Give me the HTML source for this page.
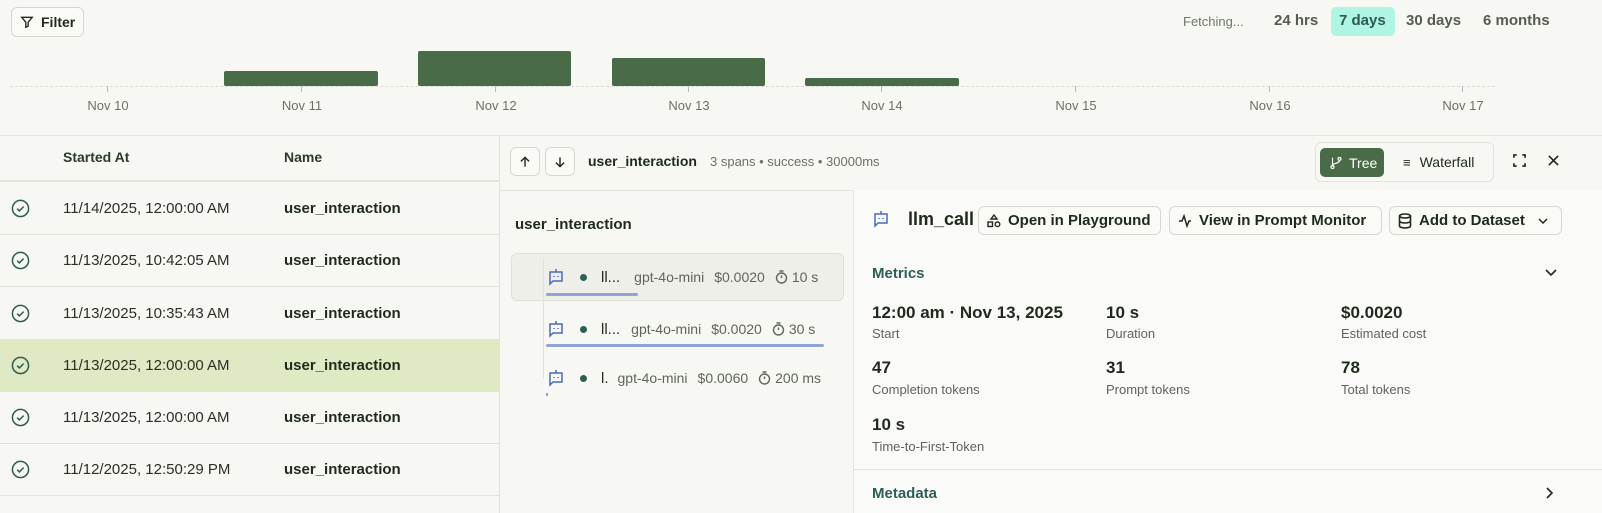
<!DOCTYPE html><html><head><style>
*{margin:0;padding:0;box-sizing:border-box}
body{width:1602px;height:513px;overflow:hidden;background:#f7f7f3;font-family:"Liberation Sans",sans-serif;color:#1f2a1c;position:relative}
.a{position:absolute}
.btn{position:absolute;border:1px solid #d6d8d0;border-radius:6px;background:#fafaf7;font-weight:bold;font-size:15px;display:flex;align-items:center;gap:7px;padding:0 8px;color:#1f2a1c}
.lbl{position:absolute;top:98px;font-size:13px;color:#6b7266;transform:translateX(-50%)}
.tick{position:absolute;top:86px;width:1px;height:6px;background:#bbb}
.bar{position:absolute;background:#4a6b47;border-radius:2px}
.row{position:absolute;left:0;width:499px;height:52px;border-bottom:1px solid #e2e3dd;font-size:15px}
.row .d{position:absolute;left:63px;top:17px;color:#2a2f28}
.row .n{position:absolute;left:284px;top:17px;font-weight:bold}
.row svg{position:absolute;left:11px;top:16px}
.m{position:absolute;font-size:17px;font-weight:bold}
.ml{position:absolute;font-size:13px;color:#5d665a}
.span{position:absolute;font-size:14px;color:#5d665a;display:flex;align-items:center}
.tm{display:inline-flex;align-items:center;gap:4px}
</style></head><body>
<div class="btn" style="left:11px;top:7px;height:30px;font-size:14px"><svg width="14" height="14" viewBox="0 0 24 24" fill="none" stroke="#1f2a1c" stroke-width="2.3"><path d="M3 4h18l-7 8.5V19l-4 2v-8.5z"/></svg>Filter</div>
<div class="a" style="left:1183px;top:14px;font-size:13px;color:#6b7a66">Fetching...</div>
<div class="a" style="left:1274px;top:12px;font-size:15px;font-weight:bold;color:#555c52">24 hrs</div>
<div class="a" style="left:1331px;top:7px;width:64px;height:29px;background:#aef5e4;border-radius:5px"></div>
<div class="a" style="left:1339px;top:12px;font-size:15px;font-weight:bold;color:#2e5a50">7 days</div>
<div class="a" style="left:1406px;top:12px;font-size:15px;font-weight:bold;color:#555c52">30 days</div>
<div class="a" style="left:1483px;top:12px;font-size:15px;font-weight:bold;color:#555c52">6 months</div>
<div class="a" style="left:10px;top:86px;width:1485px;border-top:1px dashed #dcdcd6"></div>
<div class="bar" style="left:224px;top:71px;width:154px;height:15px"></div>
<div class="bar" style="left:418px;top:51px;width:153px;height:35px"></div>
<div class="bar" style="left:612px;top:58px;width:153px;height:28px"></div>
<div class="bar" style="left:805px;top:78px;width:154px;height:8px"></div>
<div class="tick" style="left:107px"></div><div class="tick" style="left:301px"></div><div class="tick" style="left:495px"></div><div class="tick" style="left:688px"></div><div class="tick" style="left:881px"></div><div class="tick" style="left:1075px"></div><div class="tick" style="left:1269px"></div><div class="tick" style="left:1462px"></div>
<div class="lbl" style="left:108px">Nov 10</div><div class="lbl" style="left:302px">Nov 11</div><div class="lbl" style="left:496px">Nov 12</div><div class="lbl" style="left:689px">Nov 13</div><div class="lbl" style="left:882px">Nov 14</div><div class="lbl" style="left:1076px">Nov 15</div><div class="lbl" style="left:1270px">Nov 16</div><div class="lbl" style="left:1463px">Nov 17</div>
<div class="a" style="left:0;top:135px;width:1602px;border-top:1px solid #e2e3dd"></div>
<div class="a" style="left:0;top:135px;width:499px;height:47px;border-bottom:2px solid #e2e3dd"></div>
<div class="a" style="left:63px;top:149px;font-size:14px;font-weight:bold;color:#2d3a2a">Started At</div>
<div class="a" style="left:284px;top:149px;font-size:14px;font-weight:bold;color:#2d3a2a">Name</div>
<div class="a" style="left:499px;top:135px;width:1px;height:378px;background:#e2e3dd"></div>
<div class="row" style="top:183px"><svg width="19" height="19" viewBox="0 0 20 20" fill="none" stroke="#2e5e55" stroke-width="1.6"><circle cx="10" cy="10" r="8.5"/><path d="M6.5 10.2l2.3 2.3 4.5-4.5"/></svg><span class="d">11/14/2025, 12:00:00 AM</span><span class="n">user_interaction</span></div>
<div class="row" style="top:235px"><svg width="19" height="19" viewBox="0 0 20 20" fill="none" stroke="#2e5e55" stroke-width="1.6"><circle cx="10" cy="10" r="8.5"/><path d="M6.5 10.2l2.3 2.3 4.5-4.5"/></svg><span class="d">11/13/2025, 10:42:05 AM</span><span class="n">user_interaction</span></div>
<div class="row" style="top:288px"><svg width="19" height="19" viewBox="0 0 20 20" fill="none" stroke="#2e5e55" stroke-width="1.6"><circle cx="10" cy="10" r="8.5"/><path d="M6.5 10.2l2.3 2.3 4.5-4.5"/></svg><span class="d">11/13/2025, 10:35:43 AM</span><span class="n">user_interaction</span></div>
<div class="row" style="top:340px;background:#dfe9c4"><svg width="19" height="19" viewBox="0 0 20 20" fill="none" stroke="#2e5e55" stroke-width="1.6"><circle cx="10" cy="10" r="8.5"/><path d="M6.5 10.2l2.3 2.3 4.5-4.5"/></svg><span class="d">11/13/2025, 12:00:00 AM</span><span class="n">user_interaction</span></div>
<div class="row" style="top:392px"><svg width="19" height="19" viewBox="0 0 20 20" fill="none" stroke="#2e5e55" stroke-width="1.6"><circle cx="10" cy="10" r="8.5"/><path d="M6.5 10.2l2.3 2.3 4.5-4.5"/></svg><span class="d">11/13/2025, 12:00:00 AM</span><span class="n">user_interaction</span></div>
<div class="row" style="top:444px"><svg width="19" height="19" viewBox="0 0 20 20" fill="none" stroke="#2e5e55" stroke-width="1.6"><circle cx="10" cy="10" r="8.5"/><path d="M6.5 10.2l2.3 2.3 4.5-4.5"/></svg><span class="d">11/12/2025, 12:50:29 PM</span><span class="n">user_interaction</span></div>
<div class="btn" style="left:510px;top:147px;width:30px;height:29px;justify-content:center;padding:0"><svg width="14" height="14" viewBox="0 0 24 24" fill="none" stroke="#1f2a1c" stroke-width="2.4"><path d="M12 20V4M5 11l7-7 7 7"/></svg></div>
<div class="btn" style="left:545px;top:147px;width:30px;height:29px;justify-content:center;padding:0"><svg width="14" height="14" viewBox="0 0 24 24" fill="none" stroke="#1f2a1c" stroke-width="2.4"><path d="M12 4v16M5 13l7 7 7-7"/></svg></div>
<div class="a" style="left:588px;top:153px;font-size:14px;font-weight:bold">user_interaction</div>
<div class="a" style="left:710px;top:154px;font-size:13px;color:#6b7266">3 spans • success • 30000ms</div>
<div class="a" style="left:1315px;top:142px;width:179px;height:40px;border:1px solid #e2e3dd;border-radius:6px"></div>
<div class="a" style="left:1320px;top:148px;width:64px;height:29px;background:#4a6b47;border-radius:5px;color:#fff;font-size:14px;display:flex;align-items:center;gap:6px;padding-left:9px"><svg width="14" height="14" viewBox="0 0 24 24" fill="none" stroke="#fff" stroke-width="2"><circle cx="6" cy="19" r="2.5"/><circle cx="18" cy="5" r="2.5"/><path d="M6 3v13.5M18 7.5c0 6-12 4-12 9"/></svg>Tree</div>
<div class="a" style="left:1403px;top:154px;font-size:14px;display:flex;align-items:center;gap:9px"><span style="font-size:13px">≡</span>Waterfall</div>
<svg class="a" style="left:1513px;top:154px" width="13" height="13" viewBox="0 0 14 14" fill="none" stroke="#1f2a1c" stroke-width="1.8"><path d="M1 4V1h3M10 1h3v3M13 10v3h-3M4 13H1v-3"/></svg>
<svg class="a" style="left:1548px;top:155px" width="11" height="11" viewBox="0 0 12 12" stroke="#1f2a1c" stroke-width="1.8"><path d="M1 1l10 10M11 1L1 11"/></svg>
<div class="a" style="left:500px;top:190px;width:1102px;border-top:1px solid #e2e3dd"></div>
<div class="a" style="left:853px;top:190px;width:749px;height:323px;background:#fafaf8;border-left:1px solid #e2e3dd"></div>
<div class="a" style="left:515px;top:216px;font-size:15px;font-weight:bold">user_interaction</div>
<div class="a" style="left:511px;top:253px;width:333px;height:48px;background:#efefea;border:1px solid #e0e1db;border-radius:6px"></div>
<div class="a" style="left:543px;top:259px;width:1px;height:120px;background:#e0e1db"></div>
<div class="a" style="left:546px;top:293px;width:92px;height:3px;background:#8fa5d6;border-radius:2px"></div>
<div class="a" style="left:546px;top:344px;width:278px;height:3px;background:#8fa5d6;border-radius:2px"></div>
<div class="a" style="left:546px;top:393px;width:2px;height:3px;background:#8fa5d6"></div>
<div class="span" style="left:547px;top:268px"><svg width="18" height="18" viewBox="0 0 18 18" fill="none" stroke="#4a6ac0" stroke-width="1.5"><path d="M9 1v3M3 4h12v9H6l-3 3z"/><path d="M7 8v1M11 8v1"/></svg><span style="margin-left:15px;width:7px;height:7px;border-radius:50%;background:#2e5e55;display:inline-block"></span><span style="margin-left:14px;font-size:15px;color:#1f2a1c">ll...</span><span style="margin-left:14px">gpt-4o-mini</span><span style="margin-left:10px">$0.0020</span><span class="tm" style="margin-left:10px"><svg width="13" height="14" viewBox="0 0 13 14" fill="none" stroke="#5d665a" stroke-width="1.4"><circle cx="6.5" cy="8" r="5"/><path d="M4.5 1h4M6.5 8V5.5"/></svg>10 s</span></div>
<div class="span" style="left:547px;top:320px"><svg width="18" height="18" viewBox="0 0 18 18" fill="none" stroke="#4a6ac0" stroke-width="1.5"><path d="M9 1v3M3 4h12v9H6l-3 3z"/><path d="M7 8v1M11 8v1"/></svg><span style="margin-left:15px;width:7px;height:7px;border-radius:50%;background:#2e5e55;display:inline-block"></span><span style="margin-left:14px;font-size:15px;color:#1f2a1c">ll...</span><span style="margin-left:11px">gpt-4o-mini</span><span style="margin-left:10px">$0.0020</span><span class="tm" style="margin-left:10px"><svg width="13" height="14" viewBox="0 0 13 14" fill="none" stroke="#5d665a" stroke-width="1.4"><circle cx="6.5" cy="8" r="5"/><path d="M4.5 1h4M6.5 8V5.5"/></svg>30 s</span></div>
<div class="span" style="left:547px;top:369px"><svg width="18" height="18" viewBox="0 0 18 18" fill="none" stroke="#4a6ac0" stroke-width="1.5"><path d="M9 1v3M3 4h12v9H6l-3 3z"/><path d="M7 8v1M11 8v1"/></svg><span style="margin-left:15px;width:7px;height:7px;border-radius:50%;background:#2e5e55;display:inline-block"></span><span style="margin-left:14px;font-size:15px;color:#1f2a1c">l.</span><span style="margin-left:9px">gpt-4o-mini</span><span style="margin-left:10px">$0.0060</span><span class="tm" style="margin-left:10px"><svg width="13" height="14" viewBox="0 0 13 14" fill="none" stroke="#5d665a" stroke-width="1.4"><circle cx="6.5" cy="8" r="5"/><path d="M4.5 1h4M6.5 8V5.5"/></svg>200 ms</span></div>
<svg class="a" style="left:872px;top:210px" width="18" height="18" viewBox="0 0 18 18" fill="none" stroke="#4a6ac0" stroke-width="1.5"><path d="M9 1v3M3 4h12v9H6l-3 3z"/><path d="M7 8v1M11 8v1"/></svg>
<div class="a" style="left:908px;top:209px;font-size:18px;font-weight:bold">llm_call</div>
<div class="btn" style="left:978px;top:206px;height:29px;width:183px"><svg width="14" height="14" viewBox="0 0 14 14" fill="none" stroke="#1f2a1c" stroke-width="1.4"><path d="M7 1l3 4H4z"/><rect x="1" y="8" width="4.5" height="4.5"/><circle cx="10.5" cy="10.3" r="2.3"/></svg>Open in Playground</div>
<div class="btn" style="left:1169px;top:206px;height:29px;width:213px"><svg width="14" height="14" viewBox="0 0 14 14" fill="none" stroke="#1f2a1c" stroke-width="1.5"><path d="M1 7h3l2-5 3 10 2-5h2"/></svg>View in Prompt Monitor</div>
<div class="btn" style="left:1389px;top:206px;height:29px;width:173px"><svg width="14" height="16" viewBox="0 0 14 16" fill="none" stroke="#1f2a1c" stroke-width="1.6"><ellipse cx="7" cy="3" rx="5.5" ry="2"/><path d="M1.5 3v10c0 1.1 2.5 2 5.5 2s5.5-.9 5.5-2V3M1.5 8c0 1.1 2.5 2 5.5 2s5.5-.9 5.5-2"/></svg>Add to Dataset <svg style="margin-left:6px" width="10" height="6" viewBox="0 0 10 6" fill="none" stroke="#1f2a1c" stroke-width="1.5"><path d="M1 1l4 4 4-4"/></svg></div>
<div class="a" style="left:872px;top:265px;font-size:15px;font-weight:bold;color:#2e5e55">Metrics</div>
<svg class="a" style="left:1545px;top:269px" width="12" height="8" viewBox="0 0 12 8" fill="none" stroke="#1f2a1c" stroke-width="1.6"><path d="M1 1l5 5 5-5"/></svg>
<div class="m" style="left:872px;top:303px">12:00 am · Nov 13, 2025</div><div class="ml" style="left:872px;top:326px">Start</div>
<div class="m" style="left:1106px;top:303px">10 s</div><div class="ml" style="left:1106px;top:326px">Duration</div>
<div class="m" style="left:1341px;top:303px">$0.0020</div><div class="ml" style="left:1341px;top:326px">Estimated cost</div>
<div class="m" style="left:872px;top:358px">47</div><div class="ml" style="left:872px;top:382px">Completion tokens</div>
<div class="m" style="left:1106px;top:358px">31</div><div class="ml" style="left:1106px;top:382px">Prompt tokens</div>
<div class="m" style="left:1341px;top:358px">78</div><div class="ml" style="left:1341px;top:382px">Total tokens</div>
<div class="m" style="left:872px;top:415px">10 s</div><div class="ml" style="left:872px;top:439px">Time-to-First-Token</div>
<div class="a" style="left:854px;top:469px;width:748px;border-top:1px solid #e2e3dd"></div>
<div class="a" style="left:872px;top:485px;font-size:15px;font-weight:bold;color:#2e5e55">Metadata</div>
<svg class="a" style="left:1546px;top:487px" width="8" height="12" viewBox="0 0 8 12" fill="none" stroke="#1f2a1c" stroke-width="1.6"><path d="M1 1l5 5-5 5"/></svg>
</body></html>
